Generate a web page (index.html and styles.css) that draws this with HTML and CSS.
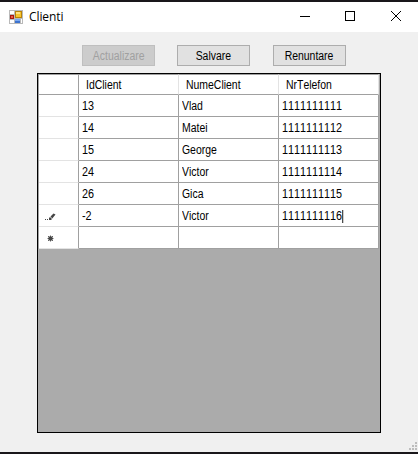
FILE: index.html
```html
<!DOCTYPE html>
<html lang="ro">
<head>
<meta charset="utf-8">
<title>Clienti</title>
<link rel="stylesheet" href="styles.css">
</head>
<body>
<div class="window">
  <header class="titlebar">
    <svg class="app-icon" width="14" height="14" viewBox="0 0 14 14" shape-rendering="crispEdges">
      <path fill="#b9b9b9" d="M0 0h14v14H0z"/>
      <path fill="#fff" d="M1 1h4v3H1zM1 10h4v3H1zM12 9h1v4h-1z"/>
      <path fill="#a81a10" d="M1 5h4v4H1z"/><path fill="#e85a48" d="M2 6h2v2H2z"/>
      <path fill="#b98208" d="M6 1h7v7H6z"/><path fill="#f7c52e" d="M7 2h5v5H7z"/><path fill="#ffe27a" d="M7 2h4v2H7z"/>
      <path fill="#3d73cf" d="M6 9h5v4H6z"/><path fill="#79a8f2" d="M6 9h5v2H6z"/>
    </svg>
    <span class="title">Clienti</span>
    <svg class="controls" width="102" height="12" viewBox="0 0 102 12" fill="none" stroke="#000">
      <path d="M0 6.5h10M45.5 1.5h9v9h-9z" shape-rendering="crispEdges"/>
      <path d="M91 1l10 10M101 1l-10 10"/>
    </svg>
  </header>
  <div class="toolbar">
    <button class="btn" disabled><span>Actualizare</span></button>
    <button class="btn salvare"><span>Salvare</span></button>
    <button class="btn renuntare"><span>Renuntare</span></button>
  </div>
  <main class="grid">
    <table>
      <thead><tr><th></th><th><span>IdClient</span></th><th><span>NumeClient</span></th><th><span>NrTelefon</span></th></tr></thead>
      <tbody>
        <tr><th></th><td><span class="num">13</span></td><td><span>Vlad</span></td><td><span class="num">1111111111</span></td></tr>
        <tr><th></th><td><span class="num">14</span></td><td><span>Matei</span></td><td><span class="num">1111111112</span></td></tr>
        <tr><th></th><td><span class="num">15</span></td><td><span>George</span></td><td><span class="num">1111111113</span></td></tr>
        <tr><th></th><td><span class="num">24</span></td><td><span>Victor</span></td><td><span class="num">1111111114</span></td></tr>
        <tr><th></th><td><span class="num">26</span></td><td><span>Gica</span></td><td><span class="num">1111111115</span></td></tr>
        <tr><th><svg class="mark" width="12" height="8" viewBox="0 0 12 8"><path fill="#444" d="M0 6h1v1H0zM2 6h1v1H2zM4 7V5l1-1 2 2-1 1zM5.5 3.5L8.500 .5l2 1-3.200 4z"/></svg></th><td><span class="num">-2</span></td><td><span>Victor</span></td><td><span class="num">1111111116<i class="caret"></i></span></td></tr>
        <tr><th><svg class="mark star" width="7" height="7" viewBox="0 0 7 7"><path stroke="#666" stroke-width="1" d="M3.500 .5v6M.5 3.500h6M1 1l5 5M6 1L1 6"/><circle cx="3.500" cy="3.500" r="2.300" fill="#444"/></svg></th><td></td><td></td><td></td></tr>
      </tbody>
    </table>
  </main>
  <svg class="grip" width="8" height="8" viewBox="0 0 8 8" shape-rendering="crispEdges"><path fill="#bdbdbd" d="M6 0h2v2H6zM3 3h2v2H3zM6 3h2v2H6zM0 6h2v2H0zM3 6h2v2H3zM6 6h2v2H6z"/></svg>
</div>
</body>
</html>
```

FILE: styles.css
```css
* { box-sizing: border-box; }
body { margin: 0; background: #f0f0f0; font: 12px/13px "Liberation Sans", Arial, sans-serif; font-kerning: none; color: #000; }
.window { position: relative; height: 454px; border: solid #19171a; border-width: 2px 0; overflow: hidden; }
.titlebar { height: 30px; background: #fff; display: flex; align-items: center; padding: 0 16px 0 9px; }
.app-icon { margin-top: -1px; }
.title { margin-left: 6px; font: 12px/16px "Open Sans", sans-serif; letter-spacing: -0.1px; margin-top: -1px; }
.controls { margin-left: auto; margin-top: -2px; }
.toolbar { display: flex; height: 41px; padding: 13px 0 0 82px; }
.btn { width: 73px; height: 21px; padding: 1px 0 0; background: #e1e1e1; border: 1px solid #adadad; font: inherit; color: #000; text-align: center; }
.btn span, td span, th span { display: inline-block; transform: scaleX(0.87); }
td span, th span { display: block; transform-origin: 0 0; width: max-content; }
td .num { transform: scaleX(0.9); }
.salvare { margin-left: 22px; }
.renuntare { margin-left: 23px; }
.btn:disabled { background: #ccc; border-color: #bfbfbf; color: #a0a0a0; }
.grid { width: 344px; height: 360px; margin-left: 37px; border: 1px solid #000; background: #ababab; }
table { width: 341px; border-collapse: separate; border-spacing: 0; table-layout: fixed; background: #fff; border-left: 1px solid #a0a0a0; }
th, td { height: 22px; padding: 1px 0 0 3px; border: solid #a0a0a0; border-width: 0 1px 1px 0; text-align: left; vertical-align: middle; font-weight: 400; white-space: nowrap; width: 100px; }
th:first-child { width: 40px; }
thead th { height: 21px; padding-left: 7px; border-top: 1px solid #a0a0a0; border-right-color: #e3e3e3; }
thead th:first-child { border-right-color: #a0a0a0; }
tbody th { border-bottom-color: #e3e3e3; padding-left: 6px; }
.mark { display: block; margin-top: 2px; }
.star { margin-left: 2px; margin-top: 1px; }
.caret { display: inline-block; width: 1px; height: 13px; background: #000; vertical-align: top; }
.grip { position: absolute; right: 1px; bottom: 2px; }
```
